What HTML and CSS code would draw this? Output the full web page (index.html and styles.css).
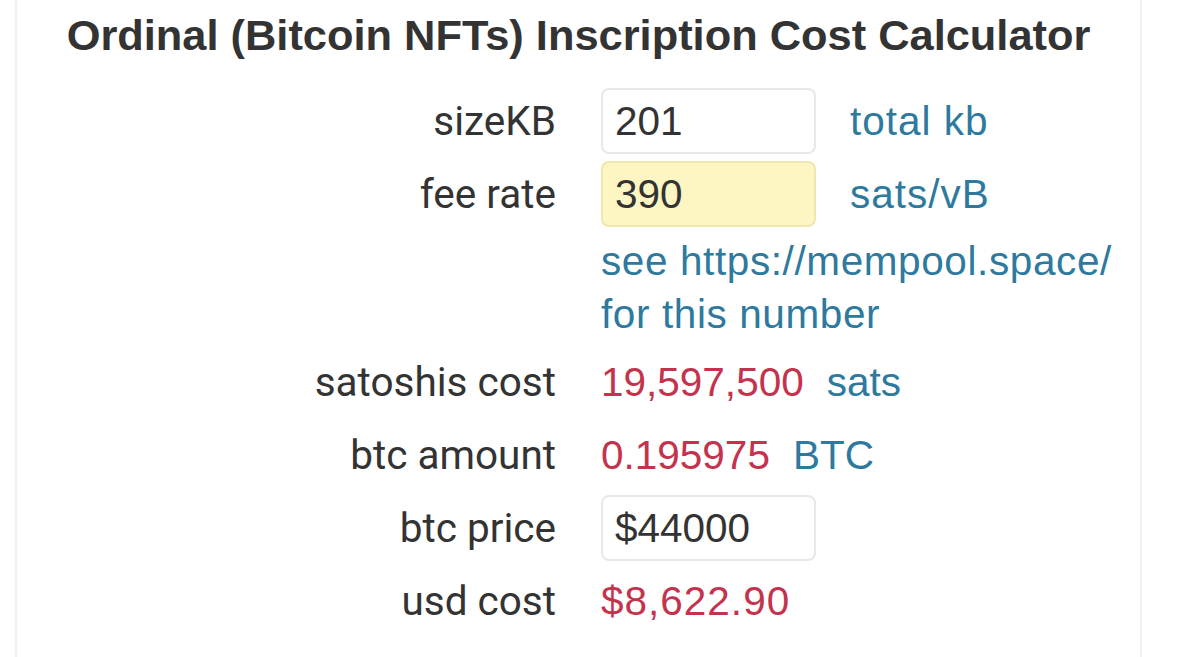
FILE: index.html
```html
<!DOCTYPE html>
<html>
<head>
<meta charset="utf-8">
<link rel="stylesheet" href="styles.css">
</head>
<body>
<div class="card">
  <h1 class="title">Ordinal (Bitcoin NFTs) Inscription Cost Calculator</h1>
  <div class="form">
    <div class="label">sizeKB</div>
    <div class="value"><div class="input">201</div><span class="unit">total kb</span></div>

    <div class="label">fee rate</div>
    <div class="value"><div class="input yellow">390</div><span class="unit">sats/vB</span></div>

    <div class="label"></div>
    <div class="note">see https://mempool.space/<br>for this number</div>

    <div class="label">satoshis cost</div>
    <div class="value text"><span class="red">19,597,500</span><span class="unit small">sats</span></div>

    <div class="label">btc amount</div>
    <div class="value text"><span class="red">0.195975</span><span class="unit small">BTC</span></div>

    <div class="label">btc price</div>
    <div class="value"><div class="input">$44000</div></div>

    <div class="label">usd cost</div>
    <div class="value text"><span class="red wide">$8,622.90</span></div>
  </div>
</div>
</body>
</html>
```
FILE: styles.css
```css
html, body {
  margin: 0;
  padding: 0;
  background: #ffffff;
}
body {
  font-family: "Liberation Sans", Arial, sans-serif;
  color: #333333;
}
.card {
  margin-left: 15px;
  width: 1123px;
  height: 657px;
  border-left: 2px solid #f0f0f0;
  border-right: 2px solid #f0f0f0;
  box-sizing: content-box;
}
.title {
  margin: 0;
  padding-top: 12px;
  text-align: center;
  font-size: 43.4px;
  font-weight: bold;
  color: #333333;
  line-height: 46px;
}
.form {
  display: grid;
  grid-template-columns: 539px auto;
  column-gap: 45px;
  row-gap: 7px;
  margin-top: 30px;
  align-items: center;
}
.label {
  text-align: right;
  font-family: Roboto, "Liberation Sans", sans-serif;
  font-size: 40.5px;
  color: #333333;
}
.value {
  display: flex;
  align-items: center;
  height: 66px;
}
.input {
  box-sizing: border-box;
  width: 215px;
  height: 66px;
  border: 2px solid #e8e8e8;
  border-radius: 8px;
  background: #ffffff;
  padding-left: 12px;
  display: flex;
  align-items: center;
  font-size: 40.5px;
  color: #333333;
}
.input.yellow {
  background: #fdf6c3;
  border-color: #efe6b0;
}
.unit {
  margin-left: 34px;
  font-size: 40.5px;
  letter-spacing: 1px;
  color: #2e7a9e;
}
.unit.small {
  margin-left: 23px;
  letter-spacing: 0;
}
.red {
  font-size: 40.5px;
  color: #c4334d;
}
.red.wide {
  letter-spacing: 1px;
}
.note {
  font-size: 40.5px;
  letter-spacing: 0.6px;
  line-height: 53px;
  color: #2e7a9e;
  margin-top: 1px;
  margin-bottom: 1px;
}
```
